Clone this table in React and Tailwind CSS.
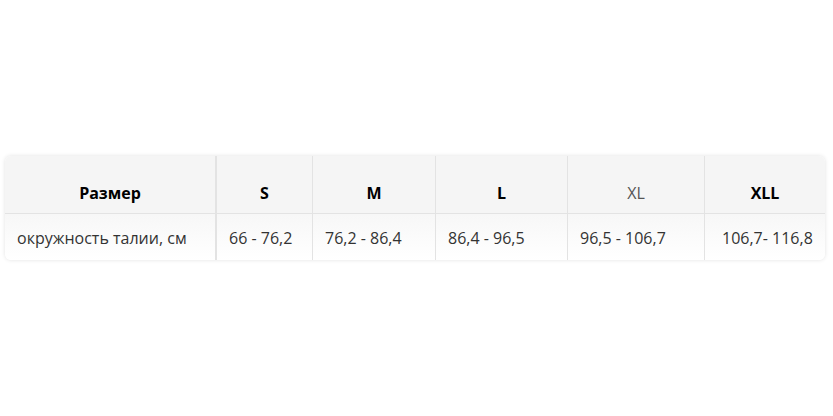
const sizes = [
  { label: 'S', range: '66 - 76,2', w: 'w-[96px]' },
  { label: 'M', range: '76,2 - 86,4', w: 'w-[123px]' },
  { label: 'L', range: '86,4 - 96,5', w: 'w-[132px]' },
  { label: 'XL', range: '96,5 - 106,7', w: 'w-[137px]', thin: true },
  { label: 'XLL', range: '106,7- 116,8', w: 'w-[120px]', pad: 'pl-[17px]' },
]

export default function App() {
  return (
    <div className="w-[833px] h-[416px] bg-white pt-[156px] px-[5px] font-['Open_Sans',sans-serif]">
      <table className="w-[820px] table-fixed border-separate border-spacing-0 rounded-md shadow-[0_0_4px_rgba(0,0,0,0.12)] overflow-hidden text-[16px]">
        <thead>
          <tr className="h-[58px] bg-[#f5f5f5]">
            <th className="w-[212px] pt-[17px] border-r-2 border-b border-[#e3e3e3] font-bold text-black text-center">Размер</th>
            {sizes.map((s, i) => (
              <th
                key={s.label}
                className={`${s.w} pt-[17px] border-b border-[#e3e3e3] text-center ${i < sizes.length - 1 ? 'border-r' : ''} ${s.thin ? 'font-normal text-[#555]' : 'font-bold text-black'}`}
              >
                {s.label}
              </th>
            ))}
          </tr>
        </thead>
        <tbody>
          <tr className="h-[46px] bg-gradient-to-b from-[#f7f7f7] to-white">
            <td className="border-r-2 border-[#e3e3e3] pl-[12px] pt-[2px] text-[#333]">окружность талии, см</td>
            {sizes.map((s, i) => (
              <td
                key={s.label}
                className={`${s.pad || 'pl-[12px]'} pt-[2px] text-[#333] border-[#e3e3e3] ${i < sizes.length - 1 ? 'border-r' : ''}`}
              >
                {s.range}
              </td>
            ))}
          </tr>
        </tbody>
      </table>
    </div>
  )
}
